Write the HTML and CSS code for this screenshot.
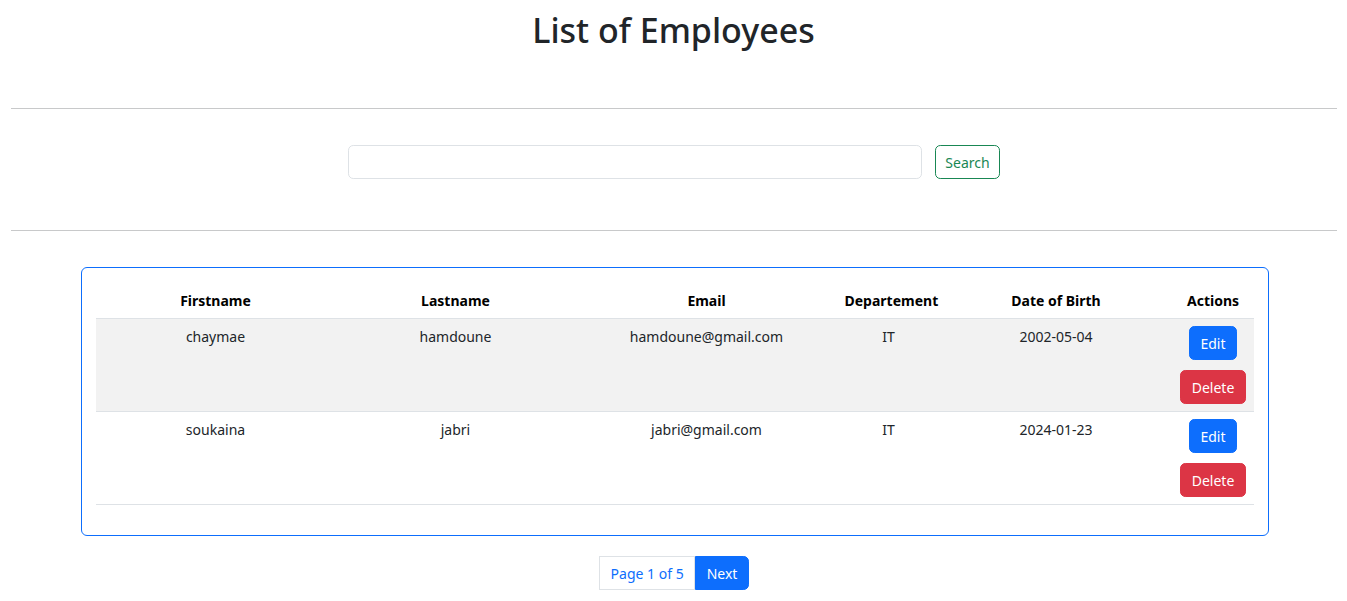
FILE: index.html
```html
<!DOCTYPE html>
<html lang="en">
<head>
<meta charset="utf-8">
<title>List of Employees</title>
<link rel="stylesheet" href="styles.css">
</head>
<body>
<div class="page">
  <h1 class="title">List of Employees</h1>
  <hr class="rule">
  <form class="search">
    <input class="search-input" type="text" aria-label="Search">
    <button class="btn btn-outline-success" type="button">Search</button>
  </form>
  <hr class="rule">
  <div class="card">
    <table class="table">
      <thead>
        <tr>
          <th class="c1">Firstname</th>
          <th class="c2">Lastname</th>
          <th class="c3">Email</th>
          <th class="c4">Departement</th>
          <th class="c5">Date of Birth</th>
          <th class="c6">Actions</th>
        </tr>
      </thead>
      <tbody>
        <tr class="striped">
          <td>chaymae</td>
          <td>hamdoune</td>
          <td>hamdoune@gmail.com</td>
          <td>IT</td>
          <td>2002-05-04</td>
          <td><div class="actions"><button class="btn btn-primary" type="button">Edit</button><button class="btn btn-danger" type="button">Delete</button></div></td>
        </tr>
        <tr>
          <td>soukaina</td>
          <td>jabri</td>
          <td>jabri@gmail.com</td>
          <td>IT</td>
          <td>2024-01-23</td>
          <td><div class="actions"><button class="btn btn-primary" type="button">Edit</button><button class="btn btn-danger" type="button">Delete</button></div></td>
        </tr>
      </tbody>
    </table>
  </div>
  <nav class="pagination">
    <span class="page-item page-info">Page 1 of 5</span>
    <a class="page-item page-next" href="#">Next</a>
  </nav>
</div>
</body>
</html>
```

FILE: styles.css
```css
html { font-size: 14px; }
* { box-sizing: border-box; }
body {
  margin: 0;
  font-family: "Segoe UI", "Noto Sans", "Open Sans", sans-serif;
  font-size: 14px;
  line-height: 1.5;
  color: #212529;
  background: #fff;
}
.page {
  padding: 0 10.5px;
}
.title {
  margin: 9px 0 0;
  font-size: 34px;
  font-weight: 500;
  line-height: 42px;
  text-align: center;
}
.rule {
  margin: 0;
  border: 0;
  border-top: 1px solid #c8c9ca;
}
.title + .rule { margin-top: 57px; }
.search {
  display: flex;
  justify-content: center;
  gap: 13px;
  margin: 36px 0 51px;
  padding-left: 1px;
}
.search-input {
  width: 574px;
  height: 34px;
  border: 1px solid #dee2e6;
  border-radius: 5.25px;
  padding: 5px 10.5px;
  font: inherit;
}
.btn {
  display: inline-block;
  font-family: inherit;
  font-size: 14px;
  line-height: 21px;
  padding: 5.5px 10.5px;
  border: 1px solid transparent;
  border-radius: 5.25px;
  cursor: pointer;
}
.btn-outline-success {
  color: #198754;
  border-color: #198754;
  background: #fff;
  height: 34px;
  padding: 5.5px 9.5px;
}
.btn-primary { background: #0d6efd; border-color: #0d6efd; color: #fff; height: 34px; }
.btn-danger { background: #dc3545; border-color: #dc3545; color: #fff; height: 34px; }
.card {
  width: 1188px;
  margin: 36px 0 0 70px;
  border: 1px solid #0d6efd;
  border-radius: 6px;
  padding: 15px 14px 16px;
  background: #fff;
}
.table {
  width: 1158px;
  border-collapse: collapse;
  table-layout: fixed;
  margin-bottom: 14px;
}
.table th, .table td {
  padding: 7px 7px;
  text-align: center;
  vertical-align: top;
  border-bottom: 1px solid #dee2e6;
}
.table th { font-weight: 700; color: #000; }
.c1 { width: 240px; }
.c2 { width: 240px; }
.c3 { width: 262px; }
.c4 { width: 102px; }
.c5 { width: 233px; }
.c6 { width: 81px; }
.striped td { background: #f2f2f2; }
.actions {
  display: flex;
  flex-direction: column;
  align-items: center;
  gap: 10px;
}
.pagination {
  display: flex;
  justify-content: center;
  margin: 20px 0 0;
  padding-left: 1px;
}
.page-item {
  display: block;
  height: 34px;
  padding: 5.5px 10.5px;
  line-height: 21px;
  font-size: 14px;
  text-decoration: none;
  border: 1px solid #dee2e6;
}
.page-info { color: #0d6efd; background: #fff; }
.page-next {
  color: #fff;
  background: #0d6efd;
  border-color: #0d6efd;
  border-radius: 0 5.25px 5.25px 0;
}
```
